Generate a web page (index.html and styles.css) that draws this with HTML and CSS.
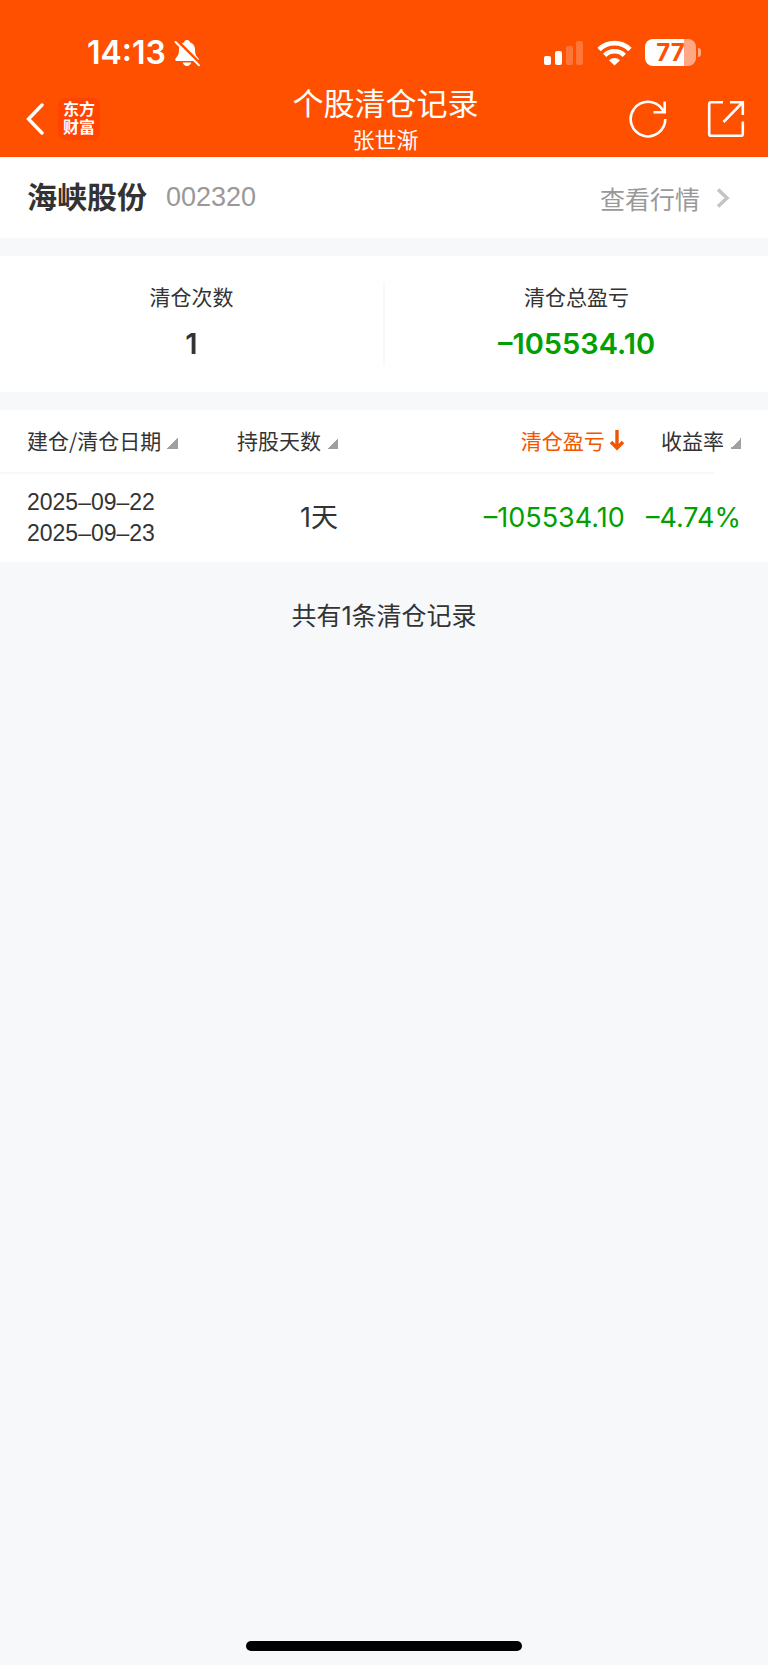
FILE: index.html
```html
<!DOCTYPE html>
<html lang="zh-CN">
<head>
<meta charset="utf-8">
<meta name="viewport" content="width=device-width, initial-scale=1">
<title>个股清仓记录</title>
<link rel="stylesheet" href="styles.css">
</head>
<body>
<header class="top">
  <div class="status">
    <div class="status-left">
      <span class="clock">14:13</span>
      <svg width="27" height="28" viewBox="0 0 27 28" aria-hidden="true">
        <path d="M13 1c-1.600 0-2.600.9-2.900 2.200C6.500 4.500 5 7.300 5 10.500c0 5-1.200 6.500-3.300 8.700-1 1.200-.6 2.800 1 2.800h20.600c1.600 0 2-1.600 1-2.800-2.100-2.200-3.300-3.700-3.300-8.700 0-3.200-1.500-6-5.100-7.300C15.600 1.900 14.600 1 13 1zM8.800 23.500c.5 2.300 2.200 3.500 4.200 3.500s3.700-1.200 4.200-3.500z" fill="#fff"/>
        <path d="M2.500 1L27 25.500" stroke="#ff5000" stroke-width="3"/>
        <path d="M1.500 3L25 26.300" stroke="#fff" stroke-width="2" stroke-linecap="round"/>
      </svg>
    </div>
    <div class="status-right">
      <svg width="40" height="26" viewBox="0 0 40 26" fill="#fff" aria-hidden="true">
        <rect x="0" y="16" width="7" height="9" rx="2"/>
        <rect x="11" y="11" width="7" height="14" rx="2"/>
        <rect x="22" y="6" width="7" height="19" rx="2" opacity=".22"/>
        <rect x="32" y="1" width="7" height="24" rx="2" opacity=".22"/>
      </svg>
      <svg width="35" height="26" viewBox="0 0 35 26" aria-hidden="true">
        <g fill="none" stroke="#fff" stroke-width="4.600">
          <path d="M2 9.500a22 22 0 0 1 31 0"/>
          <path d="M7.700 15.300a14 14 0 0 1 19.600 0"/>
        </g>
        <path d="M12 20.300a8 8 0 0 1 11 0L17.500 25.600z" fill="#fff"/>
      </svg>
      <div class="battery"><span class="battery-body">77</span><span class="battery-cap"></span></div>
    </div>
  </div>
  <nav class="nav">
    <div class="nav-side">
      <button class="icon-btn" aria-label="返回">
        <svg width="18" height="32" viewBox="0 0 18 32" fill="none" stroke="#fff" stroke-width="3.400"><path d="M16 2L2.500 16 16 30" stroke-linecap="round"/></svg>
      </button>
      <a class="brand" href="#"><span>东方</span><span>财富</span></a>
    </div>
    <div class="heading">
      <h1 class="title">个股清仓记录</h1>
      <div class="subtitle">张世渐</div>
    </div>
    <div class="nav-side nav-actions">
      <button class="icon-btn" aria-label="刷新">
        <svg width="38" height="38" viewBox="0 0 38 38" fill="none" stroke="#fff" stroke-width="2.600"><path d="M36.300 19A17.300 17.300 0 1 1 33 8.900l2 3.100M35.700 1.500V12.200H24.500"/></svg>
      </button>
      <button class="icon-btn" aria-label="分享">
        <svg width="38" height="38" viewBox="0 0 38 38" fill="none" stroke="#fff" stroke-width="2.600"><path d="M16 2.200H4A1.800 1.800 0 0 0 2.200 4v30A1.800 1.800 0 0 0 4 35.800h30a1.800 1.800 0 0 0 1.800-1.800V21.500M23 2.200h12.800V15M35.500 2.500L16.500 22"/></svg>
      </button>
    </div>
  </nav>
</header>
<main>
  <section class="stock">
    <h2 class="stock-name">海峡股份</h2>
    <span class="stock-code">002320</span>
    <a class="quote" href="#">查看行情
      <svg width="14" height="20" viewBox="0 0 14 20" fill="none" stroke="#c4c4c4" stroke-width="3.600"><path d="M2 1.500l9 8.500-9 8.500"/></svg>
    </a>
  </section>
  <section class="summary">
    <div class="stat"><div class="stat-label">清仓次数</div><div class="stat-value">1</div></div>
    <div class="stat"><div class="stat-label">清仓总盈亏</div><div class="stat-value loss">–105534.10</div></div>
  </section>
  <table class="records">
    <thead>
      <tr>
        <th class="c-date"><button class="sort">建仓/清仓日期<i class="tri"></i></button></th>
        <th class="c-days"><button class="sort">持股天数<i class="tri"></i></button></th>
        <th class="c-profit"><button class="sort active">清仓盈亏<svg width="16" height="22" viewBox="0 0 16 22" fill="none" stroke="#f25500" stroke-width="3.400"><path d="M8 1v18M2 13l6 6 6-6"/></svg></button></th>
        <th class="c-rate"><button class="sort">收益率<i class="tri"></i></button></th>
      </tr>
    </thead>
    <tbody>
      <tr>
        <td class="c-date">2025–09–22<br>2025–09–23</td>
        <td class="c-days">1天</td>
        <td class="c-profit loss">–105534.10</td>
        <td class="c-rate loss">–4.74%</td>
      </tr>
    </tbody>
  </table>
  <p class="total">共有1条清仓记录</p>
</main>
<div class="home"></div>
</body>
</html>
```
FILE: styles.css
```css
* { box-sizing: border-box; }
body {
  margin: 0;
  min-height: 100vh;
  display: flex;
  flex-direction: column;
  background: #f7f8fa;
  color: #333;
  font-family: "Liberation Sans", "Noto Sans CJK SC", sans-serif;
}
h1, h2, p { margin: 0; font-weight: 400; }
a { color: inherit; text-decoration: none; }
button { padding: 0; border: 0; background: none; color: inherit; font: inherit; }
svg { display: block; flex: none; }

.top { background: #ff5000; color: #fff; }
.status {
  display: flex;
  justify-content: space-between;
  align-items: center;
  height: 80px;
  padding: 25px 67px 0 87px;
}
.status-left { display: flex; align-items: center; gap: 8px; }
.status-right { display: flex; align-items: center; gap: 13px; }
.clock { font: 600 32px/36px Inter, sans-serif; }
.battery { display: flex; align-items: center; gap: 2px; }
.battery-body {
  width: 51px;
  height: 27px;
  border-radius: 8px;
  background: linear-gradient(90deg, #fff 77%, #ffa883 77%);
  color: #ff5000;
  font: 700 24px/27px Inter, sans-serif;
  text-align: center;
}
.battery-cap { width: 3px; height: 9px; border-radius: 0 4px 4px 0; background: #ffa883; }

.nav {
  display: grid;
  grid-template-columns: 1fr auto 1fr;
  align-items: center;
  height: 77px;
  padding: 0 23px 0 26px;
}
.nav-side { display: flex; align-items: center; gap: 14px; }
.nav-actions { justify-content: flex-end; gap: 40px; }
.brand {
  display: flex;
  flex-direction: column;
  width: 42px;
  padding: 3px 0;
  border-radius: 8px;
  background: #ff4300;
  font-size: 16px;
  font-weight: 700;
  line-height: 18px;
  text-align: center;
}
.heading { padding-top: 4px; text-align: center; }
.title { font-size: 31px; line-height: 40px; }
.subtitle { font-size: 22px; line-height: 32px; }

.stock {
  display: flex;
  align-items: center;
  height: 81px;
  padding: 0 38px 0 27px;
  background: #fff;
}
.stock-name { font-size: 30px; line-height: 40px; font-weight: 700; }
.stock-code { margin-left: 19px; font-size: 27px; color: #999; }
.quote {
  display: flex;
  align-items: center;
  gap: 16px;
  margin-left: auto;
  font-size: 25px;
  color: #999;
}

.summary {
  display: flex;
  margin: 18px 0;
  padding: 26px 0;
  background: #fff;
}
.stat { flex: 1; text-align: center; }
.stat + .stat { border-left: 2px solid #f7f8fa; }
.stat-label { font-size: 21px; line-height: 32px; }
.stat-value { padding-top: 8px; font: 600 29px/44px Inter, sans-serif; }
.loss { color: #00a000; }

.records {
  width: 100%;
  table-layout: fixed;
  border-collapse: collapse;
  background: #fff;
}
.records thead tr {
  background: linear-gradient(#f7f7f9, #f7f7f9) left bottom / calc(100% - 54px) 2px no-repeat;
}
.records th {
  height: 64px;
  padding: 0 0 4px;
  font: 400 21px/30px "Noto Sans CJK SC", sans-serif;
  text-align: right;
}
.records td {
  height: 88px;
  padding: 0;
  font: 400 27px/36px Inter, "Noto Sans CJK SC", sans-serif;
  text-align: right;
  white-space: nowrap;
}
.records .c-date { width: 26%; padding-left: 27px; text-align: left; }
.records td.c-date { font: 400 23px/31px "Liberation Sans", sans-serif; }
.records .c-days { width: 18%; }
.records .c-profit { width: 38%; padding-right: 5px; }
.records .c-rate { width: 18%; padding-right: 27px; }
.sort { display: inline-flex; align-items: center; gap: 6px; line-height: 30px; white-space: nowrap; }
.sort.active { gap: 4px; color: #f25500; }
.tri {
  width: 11px;
  height: 11px;
  margin-top: 6px;
  background: linear-gradient(135deg, transparent 50%, #a0a0a0 50%);
}
.total { padding: 35px 0; font: 400 25px/38px Inter, "Noto Sans CJK SC", sans-serif; text-align: center; }
.home {
  width: 36%;
  height: 10px;
  margin: auto auto 14px;
  border-radius: 5px;
  background: #000;
}
```
